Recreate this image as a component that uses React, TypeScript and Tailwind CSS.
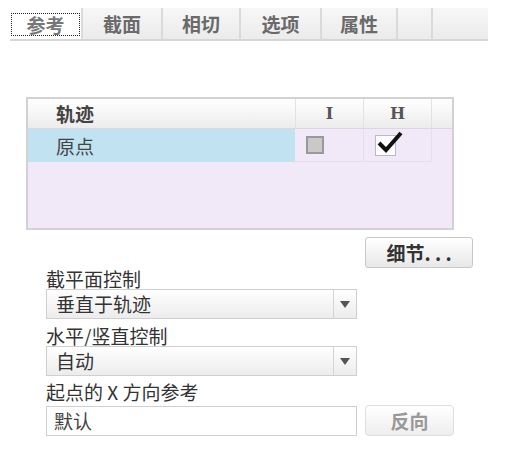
const cjk = { fontFamily: '"Noto Sans CJK SC", "Liberation Sans", sans-serif' };
const serif = { fontFamily: '"DejaVu Serif", serif' };

const tabs = [
  { label: '参考', w: 'w-[73px]' },
  { label: '截面', w: 'w-[80px]' },
  { label: '相切', w: 'w-[78px]' },
  { label: '选项', w: 'w-[81px]' },
  { label: '属性', w: 'w-[76px]' },
  { label: '', w: 'w-[35px]' },
];

function Arrow() {
  return (
    <svg width="10" height="7" viewBox="0 0 10 7">
      <path d="M0 0 H10 L5 7 Z" fill="#555" />
    </svg>
  );
}

function Select({ value }: { value: string }) {
  return (
    <div className="flex h-[30px] w-[311px] border border-[#cfcfcf] bg-gradient-to-b from-white to-[#ececec]">
      <div className="flex flex-1 items-center pl-[9px] text-[19px] leading-[20px] text-[#333]">{value}</div>
      <div className="flex w-[23px] items-center justify-center border-l border-[#d4d4d4]">
        <Arrow />
      </div>
    </div>
  );
}

function Label({ text, className = '' }: { text: string; className?: string }) {
  return (
    <div className={`h-[19px] pt-[1px] text-[19px] leading-[16px] text-[#333] ${className}`}>{text}</div>
  );
}

export default function App() {
  return (
    <div className="h-[459px] w-[515px] overflow-hidden bg-white" style={cjk}>
      {/* ── Tabs ── */}
      <div className="ml-[10px] mt-[8px] flex h-[33px] w-[478px] border-b-2 border-[#d6d6d6] bg-gradient-to-b from-[#f7f7f7] to-[#ebebeb]">
        {tabs.map((t, i) => (
          <div
            key={i}
            className={`${t.w} flex items-center border-r-2 border-[#dadada] ${
              i === 0 ? 'bg-white pl-[1px] pt-[2px]' : 'justify-center'
            }`}
          >
            {i === 0 ? (
              <div className="flex h-[23px] w-[69px] items-center justify-center border border-dotted border-[#222] text-[19px] leading-[20px] font-bold text-[#777]">
                {t.label}
              </div>
            ) : (
              <span className="text-[19px] leading-[20px] font-bold text-[#6a6a6a]">{t.label}</span>
            )}
          </div>
        ))}
      </div>

      {/* ── Trajectory table ── */}
      <div className="ml-[26px] mt-[56px] h-[133px] w-[428px] border-2 border-[#d2d2d2] bg-[#f1e8f8]">
        <div className="flex h-[30px] border-b border-[#d8d8e0] bg-gradient-to-b from-white to-[#ececec]">
          <div className="flex w-[267px] items-center pl-[28px] text-[19px] leading-[20px] font-bold text-[#444]">轨迹</div>
          <div className="flex w-[68px] items-center justify-center border-l border-[#e2e2e2] text-[16px] font-black text-[#555]" style={serif}>
            I
          </div>
          <div className="flex w-[69px] items-center justify-center border-x border-[#e2e2e2] text-[16px] font-black text-[#555]" style={serif}>
            H
          </div>
        </div>
        <div className="flex h-[33px]">
          <div className="flex w-[267px] items-center bg-[#c1e3f1] pl-[28px] text-[19px] leading-[20px] text-[#444]">原点</div>
          <div className="flex w-[68px] items-center border-b border-[#e6def0] pl-[11px]">
            <div className="h-[18px] w-[18px] border-2 border-[#999] bg-[#c9c9c9]" />
          </div>
          <div className="relative flex w-[69px] items-center border-x border-b border-[#e6def0] pl-[11px]">
            <div className="h-[21px] w-[21px] border border-[#b9b9c9] bg-white" />
            <svg className="absolute left-[12px] top-[1px]" width="28" height="24" viewBox="0 0 28 24">
              <path d="M3 13 L10 20 L25 3" fill="none" stroke="#111" strokeWidth="4" />
            </svg>
          </div>
        </div>
      </div>

      {/* ── Details button ── */}
      <div className="ml-[365px] mt-[7px] flex h-[31px] w-[108px] items-center justify-center rounded-[3px] border border-[#c8c8c8] bg-gradient-to-b from-white to-[#e8e8e8] text-[19px] leading-[20px] font-bold text-[#333]">
        细节. . .
      </div>

      {/* ── Controls ── */}
      <div className="ml-[46px] mt-[2px] flex flex-col">
        <Label text="截平面控制" />
        <Select value="垂直于轨迹" />
        <Label text="水平/竖直控制" className="mt-[8px]" />
        <Select value="自动" />
        <Label text="起点的 X 方向参考" className="mt-[7px]" />
        <div className="mt-[3px] flex items-center gap-[8px]">
          <div className="flex h-[30px] w-[311px] items-center border border-[#cfcfcf] bg-white pl-[7px] text-[19px] leading-[20px] text-[#444]">
            默认
          </div>
          <div className="flex h-[31px] w-[89px] items-center justify-center rounded-[4px] border border-[#dedede] bg-gradient-to-b from-white to-[#eeeeee] text-[19px] leading-[20px] font-bold text-[#999]">
            反向
          </div>
        </div>
      </div>
    </div>
  );
}
